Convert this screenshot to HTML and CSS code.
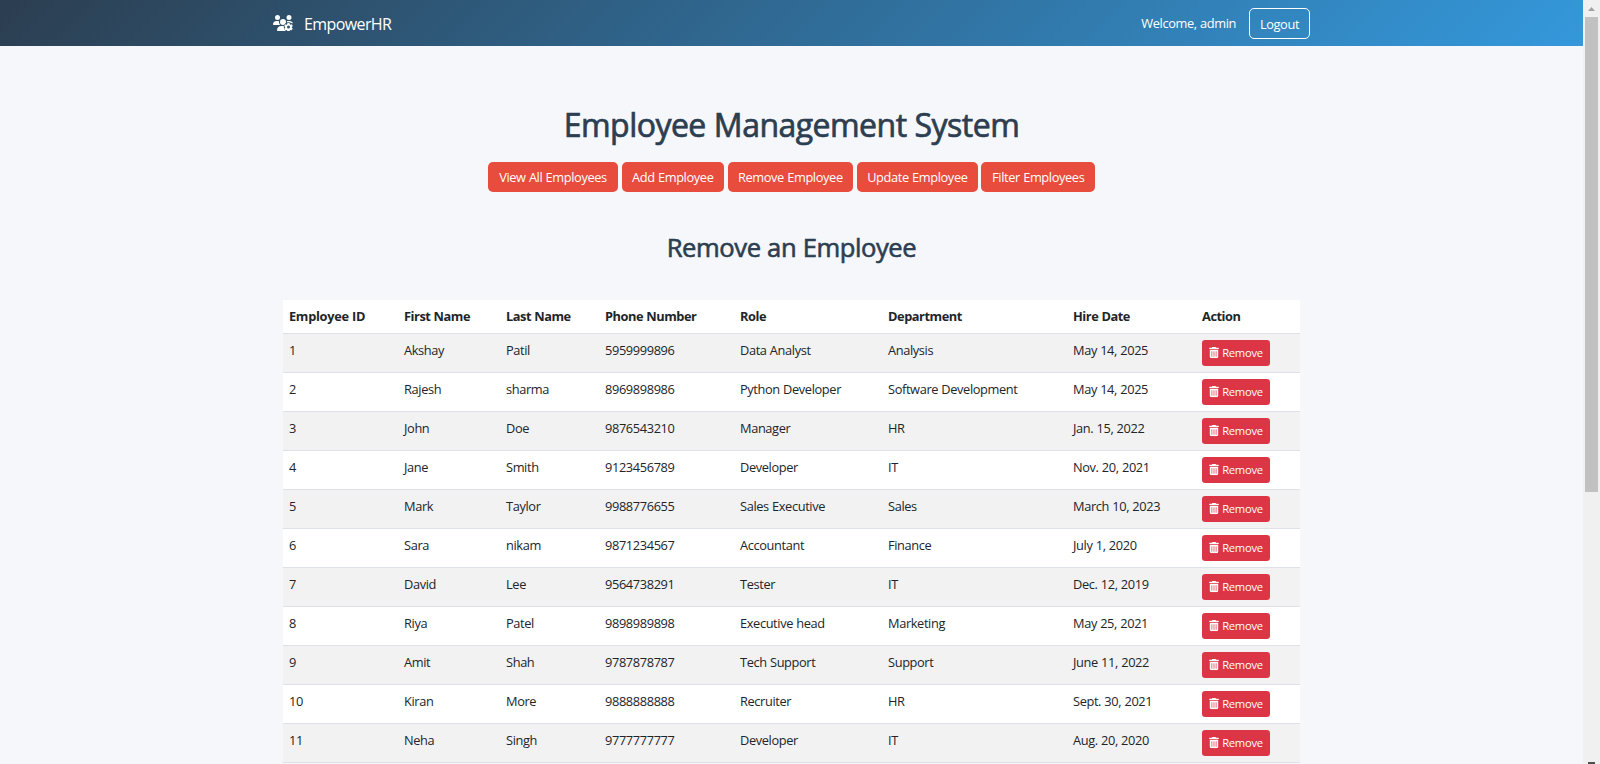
FILE: index.html
```html
<!DOCTYPE html>
<html lang="en">
<head>
<meta charset="utf-8">
<title>EmpowerHR</title>
<link rel="stylesheet" href="styles.css">
</head>
<body>
<svg class="sprite" aria-hidden="true">
  <symbol id="trash" viewBox="0 0 448 512">
    <path fill-rule="evenodd" d="M135.2 17.7L128 32H32C14.3 32 0 46.3 0 64S14.3 96 32 96H416c17.7 0 32-14.3 32-32s-14.3-32-32-32H320l-7.2-14.3C307.400 6.800 296.300 0 284.200 0H163.800c-12.100 0-23.200 6.800-28.600 17.700zM416 128H32V448c0 35.300 28.700 64 64 64H352c35.300 0 64-28.700 64-64V128zM144 208V432c0 8.800-7.200 16-16 16s-16-7.200-16-16V208c0-8.800 7.200-16 16-16s16 7.200 16 16zm96 0V432c0 8.800-7.200 16-16 16s-16-7.200-16-16V208c0-8.800 7.200-16 16-16s16 7.200 16 16zm96 0V432c0 8.800-7.200 16-16 16s-16-7.200-16-16V208c0-8.800 7.200-16 16-16s16 7.200 16 16z"/>
  </symbol>
</svg>
<div class="window">
  <div class="page">
    <header class="navbar">
      <div class="brand">
        <svg class="logo" viewBox="0 0 640 512">
          <path d="M144 160A80 80 0 1 0 144 0a80 80 0 1 0 0 160zm368 0A80 80 0 1 0 512 0a80 80 0 1 0 0 160zM0 298.700C0 310.400 9.600 320 21.300 320h214c-26.600-23.500-43.300-57.800-43.300-96c0-7.600.7-15 1.900-22.300c-13.600-6.300-28.700-9.700-44.600-9.700h-42.700C47.800 192 0 239.800 0 298.700zM320 320a96 96 0 1 0 0-192a96 96 0 1 0 0 192zM448 224c0 16-3 30-8 43h198C628 225 588 192 533.300 192h-42.700c-15.900 0-31.100 3.500-44.600 9.700c1.300 7.200 2 14.700 2 22.300zM261.300 352C187.700 352 128 411.700 128 485.300c0 14.700 11.900 26.700 26.700 26.700H455V352z"/>
          <circle class="logo-cut" cx="496" cy="384" r="152"/>
          <path fill-rule="evenodd" d="M464 256h64l10 38 24 14 38-10 32 55-28 27v28l28 27-32 55-38-10-24 14-10 38h-64l-10-38-24-14-38 10-32-55 28-27v-28l-28-27 32-55 38 10 24-14zM496 337a48 48 0 1 0 0 96a48 48 0 1 0 0-96z"/>
        </svg>
        <span class="brand-name">EmpowerHR</span>
      </div>
      <div class="account">
        <span class="welcome">Welcome, admin</span>
        <a class="logout">Logout</a>
      </div>
    </header>
    <main class="content">
      <h1>Employee Management System</h1>
      <nav class="actions">
        <a class="btn w-view">View All Employees</a>
        <a class="btn w-add">Add Employee</a>
        <a class="btn w-remove">Remove Employee</a>
        <a class="btn w-update">Update Employee</a>
        <a class="btn w-filter">Filter Employees</a>
      </nav>
      <h2>Remove an Employee</h2>
      <table class="employees">
        <colgroup><col class="c-id"><col class="c-first"><col class="c-last"><col class="c-phone"><col class="c-role"><col class="c-dept"><col class="c-date"><col class="c-action"></colgroup>
        <thead><tr><th class="th-id">Employee ID</th><th>First Name</th><th>Last Name</th><th>Phone Number</th><th>Role</th><th>Department</th><th>Hire Date</th><th>Action</th></tr></thead>
        <tbody>
          <tr><td>1</td><td>Akshay</td><td>Patil</td><td>5959999896</td><td>Data Analyst</td><td>Analysis</td><td>May 14, 2025</td><td><a class="remove"><svg><use href="#trash"/></svg>Remove</a></td></tr>
          <tr><td>2</td><td>Rajesh</td><td>sharma</td><td>8969898986</td><td>Python Developer</td><td>Software Development</td><td>May 14, 2025</td><td><a class="remove"><svg><use href="#trash"/></svg>Remove</a></td></tr>
          <tr><td>3</td><td>John</td><td>Doe</td><td>9876543210</td><td>Manager</td><td>HR</td><td>Jan. 15, 2022</td><td><a class="remove"><svg><use href="#trash"/></svg>Remove</a></td></tr>
          <tr><td>4</td><td>Jane</td><td>Smith</td><td>9123456789</td><td>Developer</td><td>IT</td><td>Nov. 20, 2021</td><td><a class="remove"><svg><use href="#trash"/></svg>Remove</a></td></tr>
          <tr><td>5</td><td>Mark</td><td>Taylor</td><td>9988776655</td><td>Sales Executive</td><td>Sales</td><td>March 10, 2023</td><td><a class="remove"><svg><use href="#trash"/></svg>Remove</a></td></tr>
          <tr><td>6</td><td>Sara</td><td>nikam</td><td>9871234567</td><td>Accountant</td><td>Finance</td><td>July 1, 2020</td><td><a class="remove"><svg><use href="#trash"/></svg>Remove</a></td></tr>
          <tr><td>7</td><td>David</td><td>Lee</td><td>9564738291</td><td>Tester</td><td>IT</td><td>Dec. 12, 2019</td><td><a class="remove"><svg><use href="#trash"/></svg>Remove</a></td></tr>
          <tr><td>8</td><td>Riya</td><td>Patel</td><td>9898989898</td><td>Executive head</td><td>Marketing</td><td>May 25, 2021</td><td><a class="remove"><svg><use href="#trash"/></svg>Remove</a></td></tr>
          <tr><td>9</td><td>Amit</td><td>Shah</td><td>9787878787</td><td>Tech Support</td><td>Support</td><td>June 11, 2022</td><td><a class="remove"><svg><use href="#trash"/></svg>Remove</a></td></tr>
          <tr><td>10</td><td>Kiran</td><td>More</td><td>9888888888</td><td>Recruiter</td><td>HR</td><td>Sept. 30, 2021</td><td><a class="remove"><svg><use href="#trash"/></svg>Remove</a></td></tr>
          <tr><td>11</td><td>Neha</td><td>Singh</td><td>9777777777</td><td>Developer</td><td>IT</td><td>Aug. 20, 2020</td><td><a class="remove"><svg><use href="#trash"/></svg>Remove</a></td></tr>
        </tbody>
      </table>
    </main>
  </div>
  <div class="scrollbar">
    <svg class="arrow" viewBox="0 0 17 17"><path d="M5 11h7L8.500 7z" fill="#a3a3a3"/></svg>
    <div class="thumb"></div>
    <div class="arrow-down"></div>
  </div>
</div>
</body>
</html>
```

FILE: styles.css
```css
* { box-sizing: border-box; }
body {
  margin: 0;
  overflow: hidden;
  background: #f5f7fb;
  color: #212529;
  font: 12.8px/19.2px "Open Sans", "Noto Sans", sans-serif;
  letter-spacing: -0.37px;
  word-spacing: 0.3px;
}
.sprite { display: none; }
.window { display: flex; height: 764px; }
.page { flex: 1; min-width: 0; }

.navbar {
  display: flex;
  justify-content: space-between;
  align-items: center;
  height: 46px;
  padding: 0 273px;
  background: linear-gradient(135deg, #2c3e50, #3498db);
  color: #fff;
}
.brand { display: flex; align-items: center; gap: 11px; }
.logo { width: 20px; height: 16px; fill: #fff; }
.logo .logo-cut { fill: #2d5373; }
.brand-name { padding-top: 1px; font-size: 16px; line-height: 24px; letter-spacing: -0.6px; }
.account { display: flex; align-items: center; gap: 13px; }
.welcome { padding-top: 2px; }
.logout {
  width: 61px;
  height: 31px;
  padding-top: 6px;
  border: 1px solid #fff;
  border-radius: 5px;
  text-align: center;
}

.content { width: 1017px; margin: 0 auto; padding-top: 60px; }
h1, h2 {
  margin: 0;
  color: #2c3e50;
  font-weight: 500;
  text-align: center;
  white-space: nowrap;
}
h1 { font-size: 32px; line-height: 38px; letter-spacing: -0.53px; -webkit-text-stroke: 0.7px #2c3e50; }
.actions { display: flex; justify-content: center; gap: 3.5px; margin-top: 18px; }
.btn {
  height: 30px;
  padding-top: 6px;
  border-radius: 5px;
  background: #e74c3c;
  color: #fff;
  text-align: center;
  white-space: nowrap;
}
.w-view { width: 130px; }
.w-add { width: 102.5px; }
.w-remove { width: 125.7px; }
.w-update { width: 121.3px; }
.w-filter { width: 113.5px; }
h2 { margin-top: 40px; font-size: 25.6px; line-height: 31px; letter-spacing: -0.43px; -webkit-text-stroke: 0.6px #2c3e50; }

.employees {
  width: 1017px;
  margin-top: 37px;
  table-layout: fixed;
  border-collapse: separate;
  border-spacing: 0;
  background: #fff;
}
.c-id { width: 115px; }
.c-first { width: 102px; }
.c-last { width: 99px; }
.c-phone { width: 135px; }
.c-role { width: 148px; }
.c-dept { width: 185px; }
.c-date { width: 129px; }
.c-action { width: 104px; }
th, td {
  height: 39px;
  padding: 7px 6px 0;
  border-bottom: 1px solid #dee2e6;
  text-align: left;
  vertical-align: top;
  white-space: nowrap;
}
td:last-child { padding-top: 6px; }
th { height: 34px; font-weight: 700; letter-spacing: -0.45px; }
.th-id { letter-spacing: -0.3px; }
tbody tr:nth-child(odd) { background: #f2f2f2; }
.remove {
  display: flex;
  align-items: center;
  justify-content: center;
  gap: 3px;
  width: 68px;
  height: 26px;
  border-radius: 3.2px;
  background: #dc3545;
  color: #fff;
  font-size: 11.2px;
  letter-spacing: -0.25px;
}
.remove svg { width: 10px; height: 11.2px; fill: #fff; }

.scrollbar {
  display: flex;
  flex-direction: column;
  align-items: center;
  width: 17px;
  background: #f0f0f0;
}
.arrow { width: 17px; height: 17px; }
.thumb { width: 13px; height: 475px; background: #c1c1c1; }
.arrow-down { width: 7px; height: 2px; margin-top: auto; background: #505050; }
```
